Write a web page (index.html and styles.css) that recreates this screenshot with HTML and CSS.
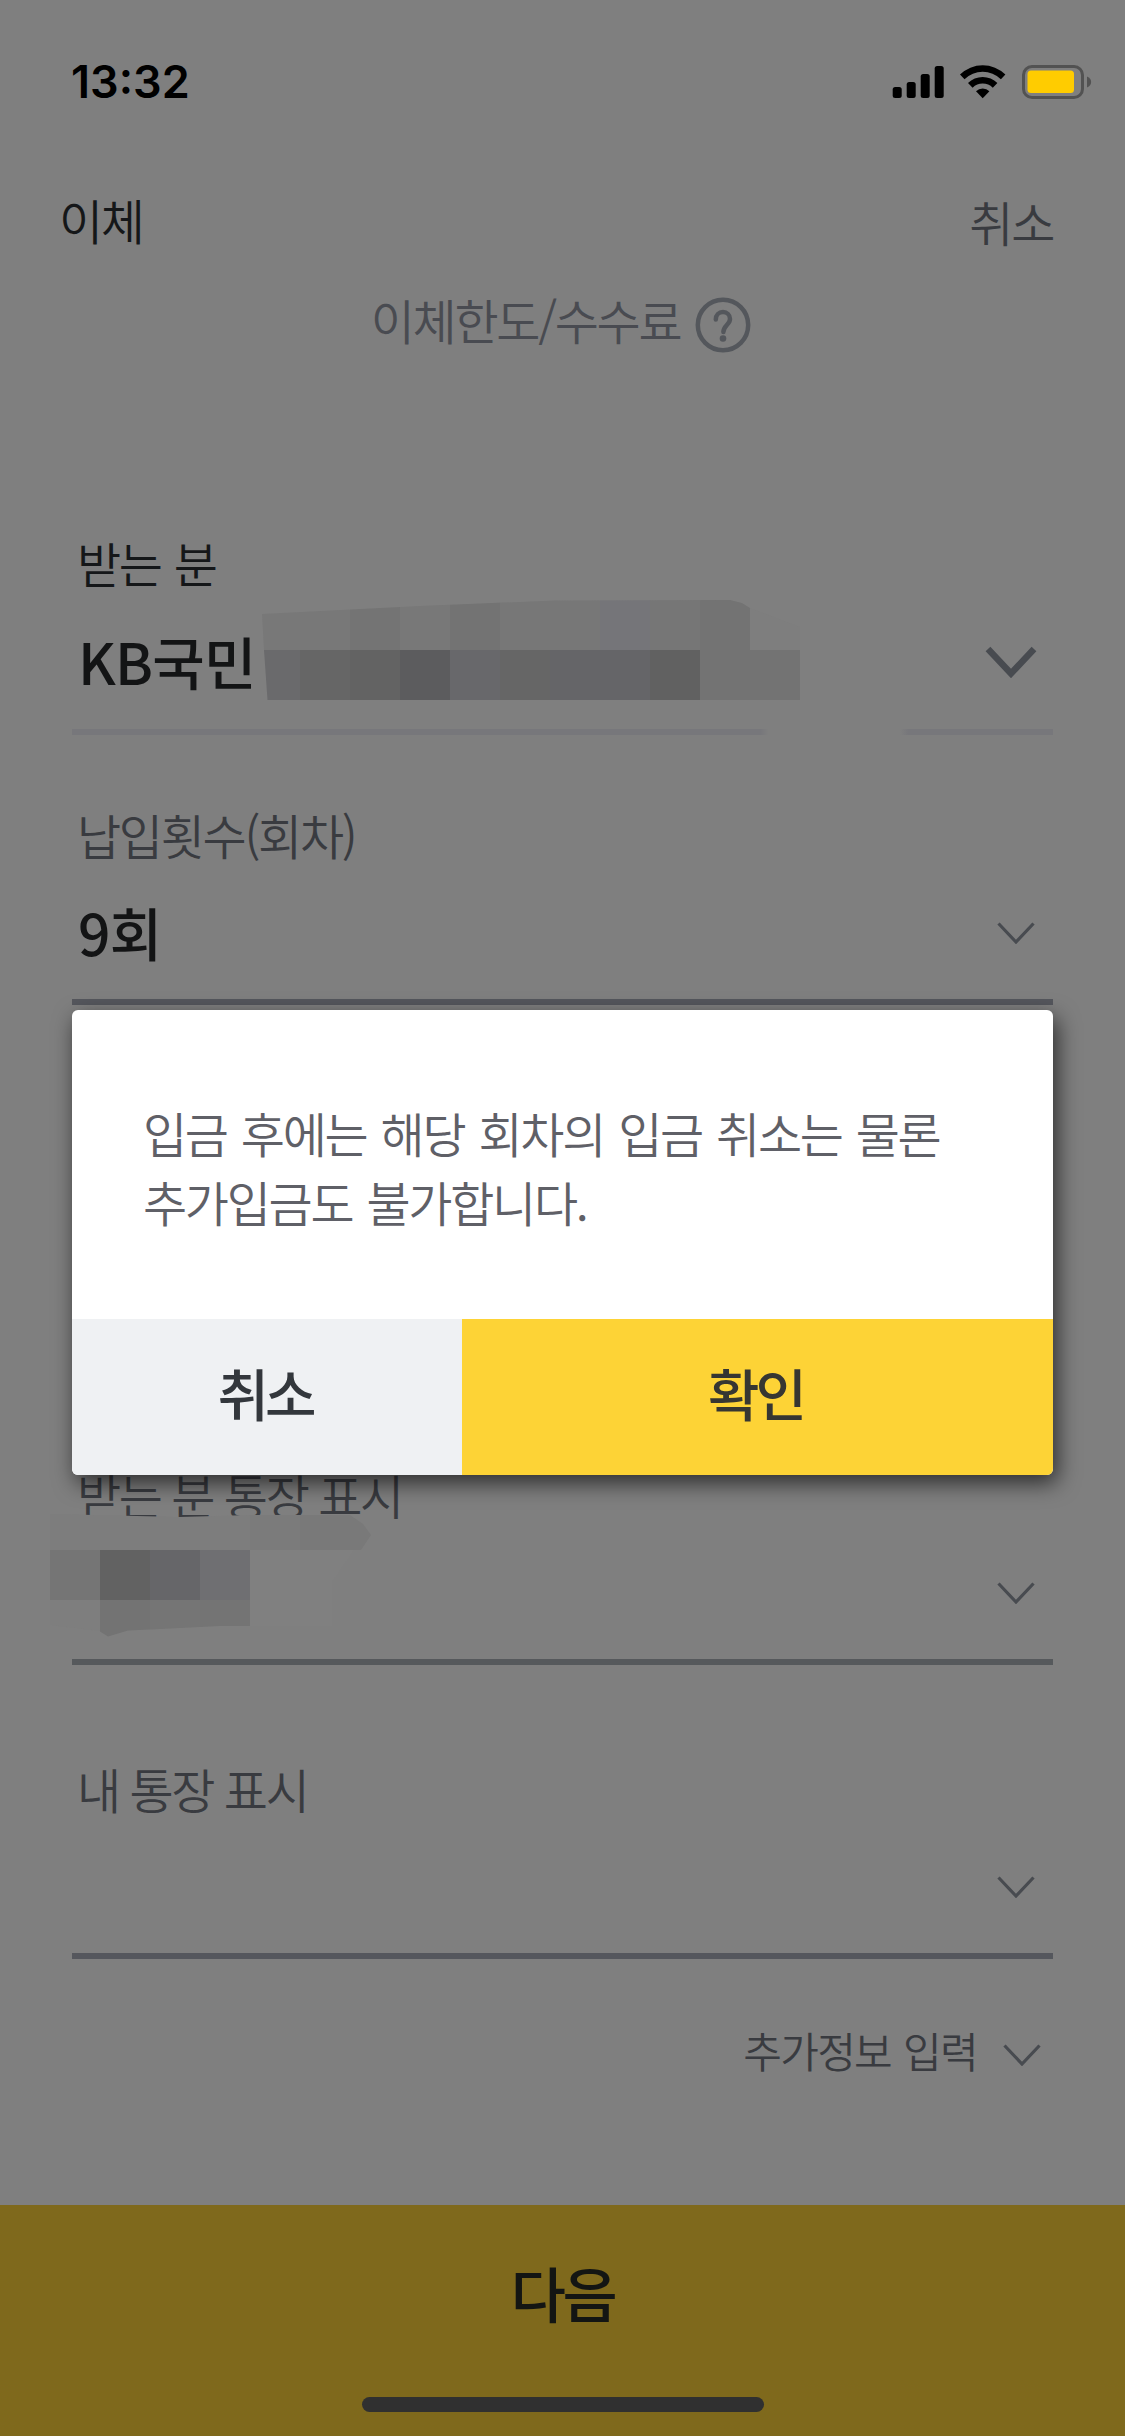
FILE: index.html
```html
<!DOCTYPE html>
<html lang="ko">
<head>
<meta charset="utf-8">
<title>이체</title>
<link rel="stylesheet" href="styles.css">
</head>
<body>
<div class="screen">
  <div class="status">
    <span class="time">13:32</span>
    <svg class="status-icons" width="200" height="36" viewBox="893 64 200 36">
      <rect x="893.7" y="87" width="9" height="11" rx="2.5"/>
      <rect x="907.7" y="82" width="9" height="16" rx="2.5"/>
      <rect x="921.7" y="74" width="9" height="24" rx="2.5"/>
      <rect x="935.7" y="66" width="9" height="32" rx="2.5"/>
      <path d="M961 74.6a32.5 32.5 0 0 1 45.400 0l-4.500 4.600a26 26 0 0 0-36.400 0z"/>
      <path d="M969 83a21 21 0 0 1 29.400 0l-4.600 4.700a14.500 14.500 0 0 0-20.200 0z"/>
      <path d="M977 91.200a9.500 9.500 0 0 1 13.400 0l-6.700 7z"/>
      <rect class="battery-case" x="1024.500" y="66.500" width="59" height="31" rx="8.500"/>
      <rect class="battery-level" x="1028.500" y="70.500" width="46.500" height="22.500" rx="3.500"/>
      <path class="battery-tip" d="M1088 76.500c5.500 2 5.500 9 0 11z"/>
    </svg>
  </div>

  <header class="topbar">
    <h1 class="title">이체</h1>
    <span class="cancel">취소</span>
  </header>

  <div class="limit">
    <span>이체한도/수수료</span>
    <svg class="help" width="56" height="56" viewBox="0 0 56 56">
      <circle cx="28" cy="28" r="25.200"/>
      <path d="M20.800 22.500c0-4.600 3.200-7.400 7.200-7.400s7 2.800 7 6.800c0 5.600-6.600 6.600-6.600 13"/>
      <circle class="dot" cx="28" cy="41.500" r="3.300"/>
    </svg>
  </div>

  <main class="form">
    <section class="field recipient">
      <div class="label">받는 분</div>
      <div class="value"><span>KB국민</span>
        <svg class="chevron-bold" width="52" height="32" viewBox="0 0 52 32"><path d="M3 3l23 24.500L49 3"/></svg>
      </div>
      <svg class="mask" width="620" height="110" viewBox="260 596 620 110">
        <defs><clipPath id="m1"><path d="M262 614L420 606L555 600.500L730 600L742 603L750 608L800 627V700H267.500L264 650z"/></clipPath></defs>
        <g clip-path="url(#m1)">
          <path fill="#787878" d="M260 596h90v54h-90z"/>
          <path fill="#747474" d="M350 596h50v54h-50z"/>
          <path fill="#787878" d="M400 596h50v54h-50z"/>
          <path fill="#737373" d="M450 596h50v54h-50z"/>
          <path fill="#777777" d="M500 596h100v54h-100z"/>
          <path fill="#757579" d="M600 596h50v54h-50z"/>
          <path fill="#767676" d="M650 596h50v54h-50z"/>
          <path fill="#737373" d="M700 596h50v54h-50z"/>
          <path fill="#7e7e7e" d="M750 596h50v54h-50z"/>
          <path fill="#6a6a6c" d="M260 650h40v50h-40z"/>
          <path fill="#666666" d="M300 650h50v50h-50z"/>
          <path fill="#636363" d="M350 650h50v50h-50z"/>
          <path fill="#5c5c5e" d="M400 650h50v50h-50z"/>
          <path fill="#68686b" d="M450 650h50v50h-50z"/>
          <path fill="#666666" d="M500 650h50v50h-50z"/>
          <path fill="#656568" d="M550 650h100v50h-100z"/>
          <path fill="#616161" d="M650 650h50v50h-50z"/>
          <path fill="#737373" d="M700 650h100v50h-100z"/>
        </g>
      </svg>
    </section>

    <section class="field count">
      <div class="label">납입횟수(회차)</div>
      <div class="value"><span>9회</span>
        <svg class="chevron" width="38" height="22" viewBox="0 0 38 22"><path d="M1.500 1.500L19 20L36.500 1.500"/></svg>
      </div>
    </section>

    <section class="field sender">
      <div class="label">받는 분 통장 표시</div>
      <div class="value">
        <svg class="chevron" width="38" height="22" viewBox="0 0 38 22"><path d="M1.500 1.500L19 20L36.500 1.500"/></svg>
      </div>
      <svg class="mask" width="340" height="130" viewBox="40 1511 340 130">
        <path fill="#7d7d7d" d="M50 1514L180 1517L250 1515V1550H50z"/>
        <path fill="#7b7b7b" d="M250 1515h50v35h-50z"/>
        <path fill="#797979" d="M300 1515h50l13 9l8 11l-10 15h-61z"/>
        <path fill="#808080" d="M250 1550h104l-22 32v44h-82z"/>
        <path fill="#757575" d="M50 1550h50v50H50z"/>
        <path fill="#626262" d="M100 1550h50v50h-50z"/>
        <path fill="#666669" d="M150 1550h50v50h-50z"/>
        <path fill="#6f6f72" d="M200 1550h50v50h-50z"/>
        <path fill="#7e7e7e" d="M50 1600h50v31l-50-6z"/>
        <path fill="#737373" d="M100 1600h50v29.500l-22 1l-20 6l-8-5z"/>
        <path fill="#757575" d="M150 1600h50v27l-50 2.500z"/>
        <path fill="#747474" d="M200 1600h50v26h-30l-20 1z"/>
      </svg>
    </section>

    <section class="field mine">
      <div class="label">내 통장 표시</div>
      <div class="value">
        <svg class="chevron" width="38" height="22" viewBox="0 0 38 22"><path d="M1.500 1.500L19 20L36.500 1.500"/></svg>
      </div>
    </section>

    <div class="more">
      <span>추가정보 입력</span>
      <svg class="chevron" width="38" height="22" viewBox="0 0 38 22"><path d="M1.500 1.500L19 20L36.500 1.500"/></svg>
    </div>
  </main>

  <footer class="next">
    <span>다음</span>
    <div class="home"></div>
  </footer>

  <div class="dialog" role="dialog">
    <p class="message">입금 후에는 해당 회차의 입금 취소는 물론<br>추가입금도 불가합니다.</p>
    <div class="actions">
      <div class="no">취소</div>
      <div class="yes">확인</div>
    </div>
  </div>
</div>
</body>
</html>
```
FILE: styles.css
```css
* { box-sizing: border-box; }

body {
  margin: 0;
  background: #7f7f7f;
  font-family: "Noto Sans CJK KR DemiLight", "Noto Sans CJK KR", sans-serif;
  font-size: 48px;
  font-weight: 350;
  line-height: 60px;
  letter-spacing: -2.300px;
  word-spacing: 3px;
  color: #393b40;
}

svg { display: block; fill: none; flex: none; }

.screen {
  position: relative;
  display: flex;
  flex-direction: column;
  width: 1125px;
  height: 2436px;
  overflow: hidden;
}

/* Status bar */
.status {
  display: flex;
  justify-content: space-between;
  align-items: center;
  height: 164px;
  padding: 0 33px 0 71px;
}
.time {
  font: 600 45px/60px Inter, sans-serif;
  letter-spacing: 0;
  color: #000;
}
.status-icons { fill: #000; }
.battery-case { fill: none; stroke: #525252; stroke-width: 3; }
.battery-level { fill: #ffcc00; }
.battery-tip { fill: #525252; }

/* Header */
.topbar {
  display: flex;
  justify-content: space-between;
  height: 64px;
  margin-top: 25px;
  padding: 0 72px 0 59px;
}
.title { margin: 0; font-size: 48px; font-weight: 350; color: #151719; }
.cancel { margin-top: 2px; }

.limit {
  display: flex;
  justify-content: center;
  gap: 15px;
  margin-top: 36px;
  padding-right: 3px;
  height: 64px;
  color: #494b51;
}
.help { margin-top: 8px; stroke: #54575c; stroke-width: 4.500; stroke-linecap: round; }
.help .dot { fill: #54575c; stroke: none; }

/* Form */
.form { padding: 0 72px; flex: 1; }
.field {
  position: relative;
  display: flex;
  flex-direction: column;
  justify-content: space-between;
  height: 204px;
  width: 981px;
  border-bottom: 6px solid #55575d;
}
.label { height: 60px; padding-left: 5px; margin-top: 3px; word-spacing: -.500px; }
.value {
  display: flex;
  justify-content: space-between;
  align-items: center;
  height: 120px;
  padding: 0 18px 12px 6px;
  font-family: "Noto Sans CJK KR", sans-serif;
  font-size: 57px;
  font-weight: 500;
  letter-spacing: -.8px;
  color: #131415;
}
.value span { margin-top: -4px; }
.chevron { margin-left: auto; stroke: #484b50; stroke-width: 3.200; }
.chevron-bold { stroke: #484b50; stroke-width: 6.500; }
.recipient {
  margin-top: 178px;
  border-bottom: 6px solid;
  border-image: linear-gradient(90deg, #77777b 686px, #7f7f7f 694px, #7f7f7f 824px, #77777b 832px) 6;
  border-top: 0;
}
.recipient .label { color: #151719; margin-top: 1px; word-spacing: 2px; }
.recipient .value { padding-right: 16px; padding-bottom: 14px; }
.mask { position: absolute; }
.recipient .mask { left: 188px; top: 65px; }
.count { margin-top: 66px; }
.sender { margin-top: 456px; border-color: #56595c; }
.sender .mask { left: -32px; top: 50px; }
.mine { margin-top: 90px; }

.more {
  display: flex;
  justify-content: flex-end;
  align-items: center;
  gap: 26px;
  margin-top: 61px;
  padding-right: 12px;
  font-size: 42px;
  letter-spacing: -1.700px;
  word-spacing: 2px;
}
.more .chevron { margin: 9px 0 0; }

/* Bottom button */
.next {
  display: flex;
  flex-direction: column;
  align-items: center;
  justify-content: space-between;
  height: 231px;
  padding: 57px 0 24px;
  background: #7f691c;
  color: #131513;
  font-family: "Noto Sans CJK KR", sans-serif;
  font-size: 60px;
  font-weight: 500;
  letter-spacing: -3.500px;
}
.home { width: 402px; height: 15px; border-radius: 8px; background: #303030; }

/* Confirmation dialog */
.dialog {
  position: absolute;
  left: 72px;
  top: 1010px;
  width: 981px;
  height: 465px;
  display: flex;
  flex-direction: column;
  justify-content: space-between;
  background: #fff;
  border-radius: 6px;
  box-shadow: 4px 8px 22px rgba(0, 0, 0, .65);
}
.message { margin: 0; padding: 88px 0 0 71px; line-height: 69px; color: #5f6067; }
.actions {
  display: grid;
  grid-template-columns: 390px 1fr;
  height: 156px;
  overflow: hidden;
  border-radius: 0 0 6px 6px;
  text-align: center;
  line-height: 146px;
  font-family: "Noto Sans CJK KR", sans-serif;
  font-size: 56px;
  font-weight: 500;
  letter-spacing: -4px;
  color: #33373c;
}
.actions div { padding-right: 4px; }
.no { background: #eff1f3; }
.yes { background: #fdd336; color: #363632; }
```
